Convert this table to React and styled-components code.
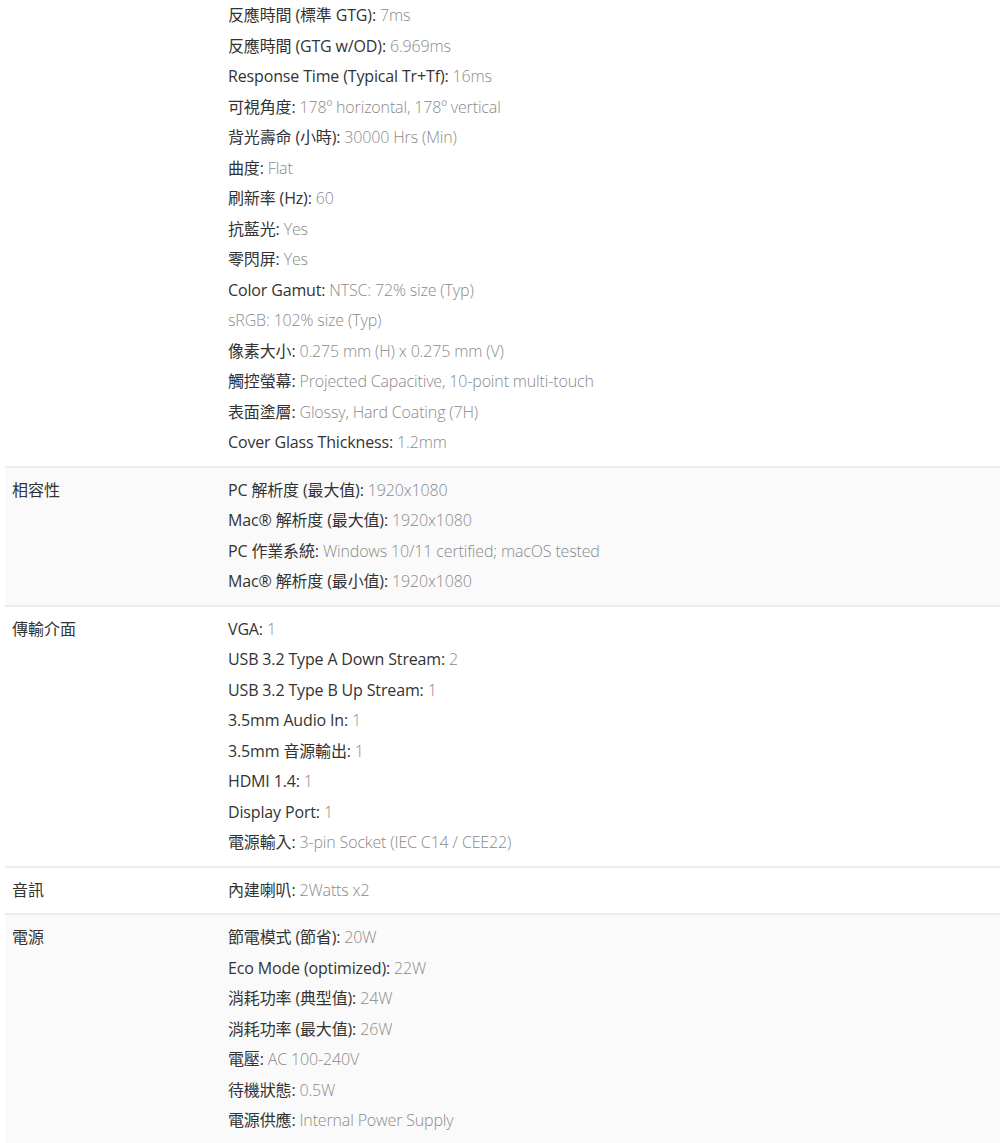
import React from "react";
import styled, { createGlobalStyle } from "styled-components";

const GlobalStyle = createGlobalStyle`
  body {
    margin: 0;
    background: #fff;
    font-family: "Open Sans", "Noto Sans CJK TC", sans-serif;
  }
`;

const SpecTable = styled.div`
  margin-left: 5px;
  display: flex;
  flex-direction: column;
`;

const SpecRow = styled.div`
  display: grid;
  grid-template-columns: 223px 1fr;
  background: ${props => (props.shaded ? "#fafafa" : "#fff")};
  border-top: ${props => (props.first ? "none" : "2px solid #ececec")};
  padding: ${props => (props.first ? "0 0 8px" : "7px 0 8px")};
  &:last-child {
    border-bottom: 2px solid #ececec;
  }
`;

const Category = styled.div`
  padding-left: 7px;
  font-size: 16px;
  line-height: 30.5px;
  color: #333;
`;

const ItemList = styled.ul`
  list-style: none;
  margin: 0;
  padding: 0;
`;

const Item = styled.li`
  font-size: 16px;
  line-height: 30.5px;
  font-weight: 300;
  letter-spacing: -0.15px;
  color: #8a8a8a;
  white-space: nowrap;
`;

const Label = styled.span`
  font-weight: 400;
  color: #333;
`;

const specs = [
  {
    title: "",
    items: [
      ["反應時間 (標準 GTG)", "7ms"],
      ["反應時間 (GTG w/OD)", "6.969ms"],
      ["Response Time (Typical Tr+Tf)", "16ms"],
      ["可視角度", "178º horizontal, 178º vertical"],
      ["背光壽命 (小時)", "30000 Hrs (Min)"],
      ["曲度", "Flat"],
      ["刷新率 (Hz)", "60"],
      ["抗藍光", "Yes"],
      ["零閃屏", "Yes"],
      ["Color Gamut", "NTSC: 72% size (Typ)"],
      [null, "sRGB: 102% size (Typ)"],
      ["像素大小", "0.275 mm (H) x 0.275 mm (V)"],
      ["觸控螢幕", "Projected Capacitive, 10-point multi-touch"],
      ["表面塗層", "Glossy, Hard Coating (7H)"],
      ["Cover Glass Thickness", "1.2mm"],
    ],
  },
  {
    title: "相容性",
    shaded: true,
    items: [
      ["PC 解析度 (最大值)", "1920x1080"],
      ["Mac® 解析度 (最大值)", "1920x1080"],
      ["PC 作業系統", "Windows 10/11 certified; macOS tested"],
      ["Mac® 解析度 (最小值)", "1920x1080"],
    ],
  },
  {
    title: "傳輸介面",
    items: [
      ["VGA", "1"],
      ["USB 3.2 Type A Down Stream", "2"],
      ["USB 3.2 Type B Up Stream", "1"],
      ["3.5mm Audio In", "1"],
      ["3.5mm 音源輸出", "1"],
      ["HDMI 1.4", "1"],
      ["Display Port", "1"],
      ["電源輸入", "3-pin Socket (IEC C14 / CEE22)"],
    ],
  },
  {
    title: "音訊",
    items: [["內建喇叭", "2Watts x2"]],
  },
  {
    title: "電源",
    shaded: true,
    items: [
      ["節電模式 (節省)", "20W"],
      ["Eco Mode (optimized)", "22W"],
      ["消耗功率 (典型值)", "24W"],
      ["消耗功率 (最大值)", "26W"],
      ["電壓", "AC 100-240V"],
      ["待機狀態", "0.5W"],
      ["電源供應", "Internal Power Supply"],
    ],
  },
];

const App = () => {
  return (
    <>
      <GlobalStyle />
      <SpecTable>
        {specs.map((group, i) => (
          <SpecRow key={i} first={i === 0} shaded={group.shaded}>
            <Category>{group.title}</Category>
            <ItemList>
              {group.items.map(([label, value], j) => (
                <Item key={j}>
                  {label && <Label>{label}: </Label>}
                  {value}
                </Item>
              ))}
            </ItemList>
          </SpecRow>
        ))}
      </SpecTable>
    </>
  );
};

export default App;
